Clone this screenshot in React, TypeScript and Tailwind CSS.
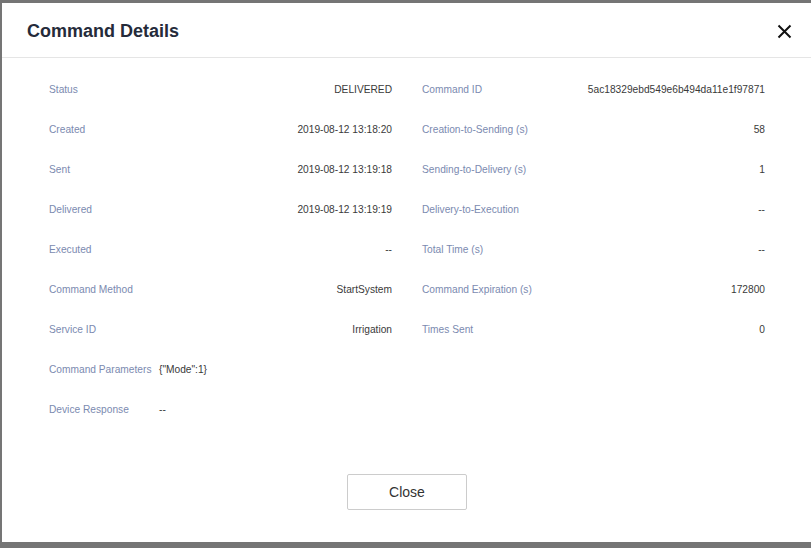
const left = [
  ['Status', 'DELIVERED'],
  ['Created', '2019-08-12 13:18:20'],
  ['Sent', '2019-08-12 13:19:18'],
  ['Delivered', '2019-08-12 13:19:19'],
  ['Executed', '--'],
  ['Command Method', 'StartSystem'],
  ['Service ID', 'Irrigation'],
]

const right = [
  ['Command ID', '5ac18329ebd549e6b494da11e1f97871'],
  ['Creation-to-Sending (s)', '58'],
  ['Sending-to-Delivery (s)', '1'],
  ['Delivery-to-Execution', '--'],
  ['Total Time (s)', '--'],
  ['Command Expiration (s)', '172800'],
  ['Times Sent', '0'],
]

function Row({ label, value }: { label: string; value: string }) {
  return (
    <div className="flex h-[40px] items-center justify-between whitespace-nowrap">
      <span className="text-[#7b8ab0]">{label}</span>
      <span className="text-[#3a3a3a]">{value}</span>
    </div>
  )
}

function WideRow({ label, value }: { label: string; value: string }) {
  return (
    <div className="flex h-[40px] items-center whitespace-nowrap">
      <span className="w-[110px] text-[#7b8ab0]">{label}</span>
      <span className="text-[#3a3a3a]">{value}</span>
    </div>
  )
}

export default function App() {
  return (
    <div className="h-[548px] w-[811px] overflow-hidden bg-[#757575] pl-[2px] pt-[3px] font-['Liberation_Sans',Arial,sans-serif]">
      <div className="flex h-[539px] w-[810px] flex-col bg-white">
        {/* Header */}
        <div className="flex h-[55px] shrink-0 items-center justify-between border-b border-[#e5e5e5] pl-[25px] pr-[20px] pt-[2px]">
          <h2 className="text-[18px] font-bold text-[#252b3a]">Command Details</h2>
          <button type="button" className="flex h-[16px] w-[16px] items-center justify-center">
            <svg width="15" height="15" viewBox="0 0 15 15" fill="none" stroke="#111" strokeWidth="2">
              <path d="M1.5 1.5l12 12M13.5 1.5l-12 12" />
            </svg>
          </button>
        </div>

        {/* Body */}
        <div className="px-[47px] pt-[12px] text-[10.2px]">
          <div className="grid grid-cols-2 gap-x-[30px]">
            <div>
              {left.map(([l, v]) => (
                <Row key={l} label={l} value={v} />
              ))}
            </div>
            <div>
              {right.map(([l, v]) => (
                <Row key={l} label={l} value={v} />
              ))}
            </div>
          </div>
          <WideRow label="Command Parameters" value={'{"Mode":1}'} />
          <WideRow label="Device Response" value="--" />
        </div>

        {/* Footer */}
        <div className="mt-[44px] flex justify-center">
          <button
            type="button"
            className="h-[36px] w-[120px] rounded-[2px] border border-[#ccc] bg-white text-[14px] text-[#333]"
          >
            Close
          </button>
        </div>
      </div>
    </div>
  )
}
